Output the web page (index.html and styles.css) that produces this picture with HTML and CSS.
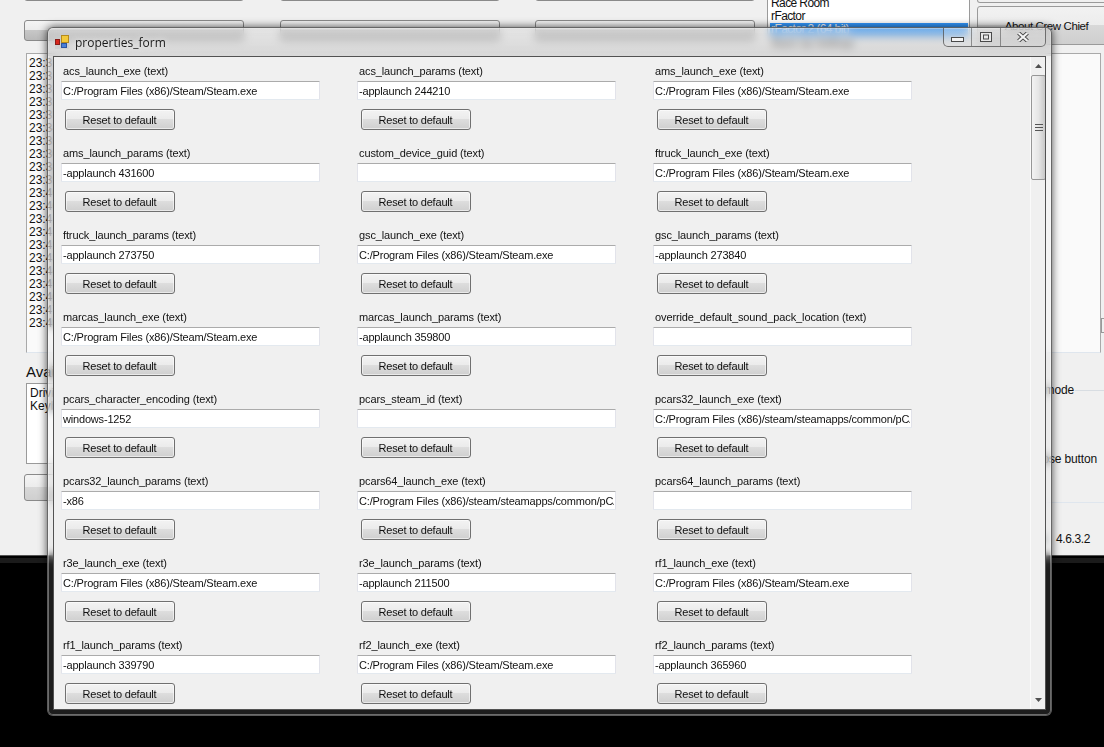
FILE: index.html
```html
<!DOCTYPE html>
<html lang="en">
<head>
<meta charset="utf-8">
<title>properties_form</title>
<link rel="stylesheet" href="styles.css">
</head>
<body>
<div class="desktop">
  <div class="app">
    <div class="app-top">
      <div class="top-buttons">
        <div class="bg-btn cut"></div><div class="bg-btn cut"></div><div class="bg-btn cut"></div>
        <div class="bg-btn"></div><div class="bg-btn"></div><div class="bg-btn"></div>
      </div>
      <div class="top-middle">
        <div class="games">
          <div>Race Room</div>
          <div>rFactor</div>
          <div class="selected">rFactor 2 (64 bit)</div>
        </div>
        <div class="backup">Back Up Settings</div>
      </div>
      <div class="top-right">
        <div class="about-above"></div>
        <div class="about">About Crew Chief</div>
      </div>
    </div>
    <div class="log">
      <div>23:31</div><div>23:31</div><div>23:32</div><div>23:32</div><div>23:33</div><div>23:34</div><div>23:35</div><div>23:36</div><div>23:38</div><div>23:39</div>
      <div>23:40</div><div>23:40</div><div>23:41</div><div>23:41</div><div>23:42</div><div>23:43</div><div>23:44</div><div>23:45</div><div>23:46</div><div>23:47</div><div>23:48</div>
      <span class="log-nub"></span>
    </div>
    <div class="app-bottom">
      <div class="controllers">
        <div class="avail">Available controllers</div>
        <div class="ctrl-list"><div>Driving Force</div><div>Keyboard</div></div>
        <div class="ctrl-btn"></div>
      </div>
      <div class="options">
        <div class="opt-mode"><span>Voice recognition mode</span><i class="rule"></i></div>
        <div class="opt-button">Toggle close button</div>
        <div class="version">Version 4.6.3.2</div>
      </div>
    </div>
  </div>

  <div class="window">
    <div class="titlebar">
      <svg class="app-icon" width="14" height="14" viewBox="0 0 14 14">
        <rect x="0" y="0" width="14" height="14" fill="#c9c9c9" opacity=".55"/>
        <rect x="6.5" y="0.5" width="7" height="7" fill="#f3c93a" stroke="#b58a1c"/>
        <rect x="0.5" y="4.5" width="4" height="5" fill="#d8261c" stroke="#8a1d18"/>
        <rect x="6.5" y="8.5" width="5" height="4" fill="#4a7fd8" stroke="#2d56a0"/>
      </svg>
      <span class="title">properties_form</span>
      <div class="controls">
        <div class="ctl ctl-min">
          <svg width="13" height="5" viewBox="0 0 13 5"><rect x=".5" y=".5" width="12" height="4" fill="#f4f4f4" stroke="#4a4a4a"/></svg>
        </div>
        <div class="ctl ctl-max">
          <svg width="12" height="10" viewBox="0 0 12 10"><rect x=".5" y=".5" width="11" height="9" fill="#e8e8e8" stroke="#4a4a4a"/><rect x="3.5" y="3" width="5" height="4" fill="none" stroke="#4a4a4a"/></svg>
        </div>
        <div class="ctl ctl-close">
          <svg width="12" height="10" viewBox="0 0 12 10"><path d="M1.5 1 L10.5 9 M10.5 1 L1.5 9" stroke="#4a4a4a" stroke-width="4"/><path d="M1.5 1 L10.5 9 M10.5 1 L1.5 9" stroke="#f4f4f4" stroke-width="2.2"/></svg>
        </div>
      </div>
    </div>
    <div class="client">
      <div class="props">
        <div class="prop"><label>acs_launch_exe (text)</label><input value="C:/Program Files (x86)/Steam/Steam.exe"><button>Reset to default</button></div>
        <div class="prop"><label>acs_launch_params (text)</label><input value="-applaunch 244210"><button>Reset to default</button></div>
        <div class="prop"><label>ams_launch_exe (text)</label><input value="C:/Program Files (x86)/Steam/Steam.exe"><button>Reset to default</button></div>

        <div class="prop"><label>ams_launch_params (text)</label><input value="-applaunch 431600"><button>Reset to default</button></div>
        <div class="prop"><label>custom_device_guid (text)</label><input value=""><button>Reset to default</button></div>
        <div class="prop"><label>ftruck_launch_exe (text)</label><input value="C:/Program Files (x86)/Steam/Steam.exe"><button>Reset to default</button></div>

        <div class="prop"><label>ftruck_launch_params (text)</label><input value="-applaunch 273750"><button>Reset to default</button></div>
        <div class="prop"><label>gsc_launch_exe (text)</label><input value="C:/Program Files (x86)/Steam/Steam.exe"><button>Reset to default</button></div>
        <div class="prop"><label>gsc_launch_params (text)</label><input value="-applaunch 273840"><button>Reset to default</button></div>

        <div class="prop"><label>marcas_launch_exe (text)</label><input value="C:/Program Files (x86)/Steam/Steam.exe"><button>Reset to default</button></div>
        <div class="prop"><label>marcas_launch_params (text)</label><input value="-applaunch 359800"><button>Reset to default</button></div>
        <div class="prop"><label>override_default_sound_pack_location (text)</label><input value=""><button>Reset to default</button></div>

        <div class="prop"><label>pcars_character_encoding (text)</label><input value="windows-1252"><button>Reset to default</button></div>
        <div class="prop"><label>pcars_steam_id (text)</label><input value=""><button>Reset to default</button></div>
        <div class="prop"><label>pcars32_launch_exe (text)</label><input value="C:/Program Files (x86)/steam/steamapps/common/pCARS/pCARS.exe"><button>Reset to default</button></div>

        <div class="prop"><label>pcars32_launch_params (text)</label><input value="-x86"><button>Reset to default</button></div>
        <div class="prop"><label>pcars64_launch_exe (text)</label><input value="C:/Program Files (x86)/steam/steamapps/common/pCARS/pCARS64.exe"><button>Reset to default</button></div>
        <div class="prop"><label>pcars64_launch_params (text)</label><input value=""><button>Reset to default</button></div>

        <div class="prop"><label>r3e_launch_exe (text)</label><input value="C:/Program Files (x86)/Steam/Steam.exe"><button>Reset to default</button></div>
        <div class="prop"><label>r3e_launch_params (text)</label><input value="-applaunch 211500"><button>Reset to default</button></div>
        <div class="prop"><label>rf1_launch_exe (text)</label><input value="C:/Program Files (x86)/Steam/Steam.exe"><button>Reset to default</button></div>

        <div class="prop"><label>rf1_launch_params (text)</label><input value="-applaunch 339790"><button>Reset to default</button></div>
        <div class="prop"><label>rf2_launch_exe (text)</label><input value="C:/Program Files (x86)/Steam/Steam.exe"><button>Reset to default</button></div>
        <div class="prop"><label>rf2_launch_params (text)</label><input value="-applaunch 365960"><button>Reset to default</button></div>
      </div>
      <div class="scrollbar">
        <svg class="arrow-up" width="7" height="4" viewBox="0 0 7 4"><path d="M3.5 0 L7 4 L0 4 Z" fill="#505050"/></svg>
        <div class="thumb">
          <svg width="8" height="9" viewBox="0 0 8 9"><path d="M0 1.5H8M0 4.5H8M0 7.5H8" stroke="#555" stroke-width="1"/></svg>
        </div>
        <svg class="arrow-down" width="7" height="4" viewBox="0 0 7 4"><path d="M0 0 L7 0 L3.5 4 Z" fill="#505050"/></svg>
      </div>
    </div>
  </div>
</div>
</body>
</html>
```

FILE: styles.css
```css
* { box-sizing: border-box; }
html, body { margin: 0; padding: 0; background: #000; }
body { font: 11px/13px "Liberation Sans", Arial, sans-serif; letter-spacing: -.12px; color: #111; }

.desktop { position: relative; width: 1104px; height: 747px; overflow: hidden; background: #000; }

/* Background application */
.app { width: 1104px; height: 555px; background: #f0f0f0; display: flex; flex-direction: column; overflow: hidden; box-shadow: 0 1px 0 #555, 0 3px 0 #000, 0 8px 0 #1b1b1b; }
.app-top { height: 53px; display: flex; flex: none; }
.top-buttons { width: 743px; margin-left: 24px; display: grid; grid-template-columns: repeat(3, 220px); column-gap: 35.5px; grid-auto-rows: 21px; row-gap: 19px; margin-top: -20px; flex: none; }
.bg-btn { border: 1px solid #8a8a8a; border-radius: 3px; background: linear-gradient(#f4f4f4 0, #ececec 45%, #c8c8c8 46%, #b9b9b9 100%); }
.top-middle { width: 203px; flex: none; display: flex; flex-direction: column; }
.games { height: 37px; padding: 0 1px 0 3px; background: #fff; border: 1px solid #9a9a9a; border-top: none; display: flex; flex-direction: column; justify-content: flex-end; font-size: 12px; letter-spacing: -.6px; }
.games .selected { background: #3399ff; color: #fff; margin-left: -1px; padding-left: 1px; }
.backup { margin-left: 5px; color: #222; }
.top-right { margin-left: 7px; flex: 1; min-width: 0; }
.about-above { height: 3px; border: 1px solid #9a9a9a; border-top: none; margin-right: -20px; border-radius: 0 0 3px 3px; }
.about { margin-top: 3px; height: 39px; margin-right: -12px; border: 1px solid #9a9a9a; border-radius: 3px; padding-top: 13px; text-align: center; font-size: 11.5px; letter-spacing: -.4px; background: linear-gradient(#f2f2f2 0, #ececec 49%, #d8d8d8 50%, #cfcfcf 100%); }

.log { flex: none; position: relative; height: 300px; margin: 0 3px 0 26px; padding: 3px 0 0 2px; background: #fafafa; border: 1px solid #a9a9a9; border-bottom-color: #dfe6ee; font-size: 12px; letter-spacing: 0; }
.log-nub { position: absolute; right: -4px; top: 264px; width: 3px; height: 15px; border: 1px solid #999; border-right: none; background: #f0f0f0; }

.app-bottom { flex: 1; display: flex; justify-content: space-between; }
.controllers { margin-left: 24px; padding-top: 10px; width: 180px; }
.avail { font-size: 15px; line-height: 18px; padding-left: 2px; letter-spacing: 0; }
.ctrl-list { margin: 2px 0 0 2px; height: 81px; border: 1px solid #9a9a9a; background: #fff; padding: 3px 3px; font-size: 12px; letter-spacing: 0; }
.ctrl-btn { margin-top: 10px; height: 27px; border: 1px solid #8a8a8a; border-radius: 3px; background: linear-gradient(#f4f4f4 0, #ececec 49%, #d8d8d8 50%, #cfcfcf 100%); }
.options { width: 154px; display: flex; flex-direction: column; font-size: 12px; letter-spacing: -.15px; }
.opt-mode { margin-top: 31px; display: flex; align-items: center; white-space: nowrap; justify-content: flex-end; }
.opt-mode span { margin-right: 1px; }
.rule { display: block; width: 29px; height: 1px; background: #d8dde2; }
.opt-button { margin-top: 56px; white-space: nowrap; text-align: right; padding-right: 7px; }
.version { margin-top: 36px; padding: 30px 14px 0 0; border-top: 1px solid #dfe6ee; white-space: nowrap; text-align: right; letter-spacing: -.4px; word-spacing: 8px; }

/* Properties window (aero glass) */
.window { position: absolute; left: 47px; top: 27px; width: 1005px; height: 689px; padding: 0 5px 5px; display: flex; flex-direction: column; border: 1px solid rgba(95,95,95,.95); border-radius: 6px; background: rgba(205,205,205,.14); -webkit-backdrop-filter: blur(4px); backdrop-filter: blur(4px); box-shadow: 0 0 9px rgba(0,0,0,.7), inset 0 0 0 1px rgba(255,255,255,.35); }
.titlebar { height: 28px; flex: none; margin: 0 -5px; padding: 0 5px 0 7px; display: flex; background: linear-gradient(rgba(210,210,210,.3), rgba(195,195,195,.45)); border-radius: 5px 5px 0 0; }
.app-icon { margin-top: 7px; flex: none; }
.title { margin: 6px 0 0 6px; font: 12px/17px "Open Sans", "Noto Sans", sans-serif; letter-spacing: 0; color: #1a1a1a; text-shadow: 0 0 6px rgba(255,255,255,.9); }
.controls { margin-left: auto; width: 103px; height: 19px; display: flex; border: 1px solid rgba(85,85,85,.8); border-top: none; border-radius: 0 0 5px 5px; background: linear-gradient(rgba(255,255,255,.2), rgba(255,255,255,.05)); overflow: hidden; }
.ctl { height: 100%; display: flex; justify-content: center; align-items: flex-start; }
.ctl + .ctl { border-left: 1px solid rgba(85,85,85,.6); }
.ctl-min { width: 27px; padding-top: 9px; }
.ctl-max { width: 29px; padding-top: 4px; }
.ctl-close { flex: 1; padding-top: 4px; }

.client { flex: 1; min-height: 0; display: flex; background: #f0f0f0; border: 1px solid rgba(30,30,30,.75); overflow: hidden; }
.props { width: 976px; flex: none; padding-left: 7px; display: grid; grid-template-columns: repeat(3, 296px); grid-auto-rows: 82px; overflow: hidden; }
.prop { padding-top: 7px; display: flex; flex-direction: column; align-items: flex-start; }
.prop label { height: 17px; padding-left: 2px; line-height: 15px; white-space: nowrap; color: #111; }
.prop input { width: 259px; height: 19px; padding: 0 1px; border: 1px solid; border-color: #ababab #e2e3ea #e3e9ef #e2e3ea; border-radius: 1px; background: #fff; font: 11px "Liberation Sans", Arial, sans-serif; letter-spacing: -.18px; color: #111; outline: none; }
.prop button { margin: 9px 0 0 4px; width: 110px; height: 21px; padding: 0 1px 0 0; border: 1px solid #707070; border-radius: 3px; background: linear-gradient(#f3f3f3 0, #ebebeb 48%, #dddddd 50%, #cfcfcf 100%); font: 11px "Liberation Sans", Arial, sans-serif; letter-spacing: -.2px; color: #111; box-shadow: inset 0 0 0 1px rgba(255,255,255,.55); }

.scrollbar { flex: 1; display: flex; flex-direction: column; align-items: center; background: #f0f0f0; border-left: 1px solid #fafafa; padding-top: 7px; }
.arrow-up { flex: none; margin-left: -1px; }
.thumb { flex: none; margin-top: 7px; width: 15px; height: 105px; display: flex; align-items: center; justify-content: center; border: 1px solid #979797; border-radius: 2px; background: linear-gradient(90deg, #f3f3f3 0, #e6e6e6 50%, #c8c8c8 100%); }
.arrow-down { flex: none; margin-top: auto; margin-bottom: 7px; margin-left: -1px; }
```
